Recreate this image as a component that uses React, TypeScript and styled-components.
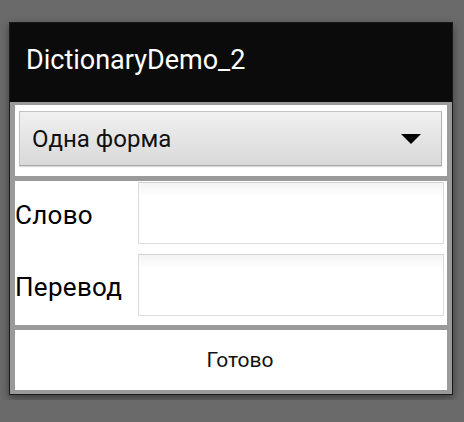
import React from "react";
import styled, { createGlobalStyle } from "styled-components";

const Global = createGlobalStyle`
  html, body { margin: 0; padding: 0; background: #6a6a6a; }
  body { font-family: Roboto, "Noto Sans", sans-serif; }
  #root { padding: 22px 0 0 9px; height: 400px; box-sizing: border-box; }
`;

const Window = styled.div`
  width: 444px;
  height: 373px;
  box-sizing: border-box;
  border: 1px solid #1a1a1a;
  background: #9a9a9a;
  display: flex;
  flex-direction: column;
  box-shadow: 0 3px 8px rgba(0, 0, 0, 0.45);
`;

const TitleBar = styled.div`
  height: 79px;
  background: #0b0b0b;
  color: #fff;
  display: flex;
  align-items: center;
  padding: 0 0 5px 16px;
  font-size: 27px;
  flex-shrink: 0;
  box-sizing: border-box;
`;

const Content = styled.div`
  flex: 1;
  display: flex;
  flex-direction: column;
  gap: 5px;
  padding: 3px 5px 4px 5px;
`;

const Section = styled.div<{ $h: number }>`
  background: #fff;
  height: ${(p) => p.$h}px;
  box-sizing: border-box;
`;

const SpinnerWrap = styled(Section)`
  padding: 6px 5px 10px 4px;
`;

const Spinner = styled.div`
  height: 100%;
  box-sizing: border-box;
  border: 1px solid #c2c2c2;
  border-bottom-color: #a8a8a8;
  border-right-color: #b0b0b0;
  background: linear-gradient(#f0f0f0, #d9d9d9);
  box-shadow: 0 1px 1px rgba(0, 0, 0, 0.15);
  display: flex;
  align-items: center;
  justify-content: space-between;
  padding: 0 20px 0 12px;
  font-size: 24px;
  color: #111;
`;

const Arrow = styled.div`
  width: 0;
  height: 0;
  border-left: 10px solid transparent;
  border-right: 10px solid transparent;
  border-top: 10px solid #000;
`;

const Form = styled(Section)`
  display: grid;
  grid-template-columns: 123px 1fr;
  grid-auto-rows: 62px;
  row-gap: 10px;
  padding: 1px 3px 0 0;
  align-items: center;
`;

const Label = styled.div`
  font-size: 26px;
  letter-spacing: 0.3px;
  color: #000;
  padding-top: 4px;
`;

const Input = styled.div`
  height: 100%;
  box-sizing: border-box;
  border: 1px solid #dcdcdc;
  border-top-color: #d2d2d2;
  background: linear-gradient(#f4f4f4, #fff 14px);
`;

const Button = styled(Section)`
  display: flex;
  align-items: center;
  justify-content: center;
  font-size: 21px;
  color: #111;
  padding-left: 18px;
`;

export default function App() {
  return (
    <>
      <Global />
      <Window>
        <TitleBar>DictionaryDemo_2</TitleBar>
        <Content>
          <SpinnerWrap $h={71}>
            <Spinner>
              <span>Одна форма</span>
              <Arrow />
            </Spinner>
          </SpinnerWrap>
          <Form $h={144}>
            <Label>Слово</Label>
            <Input />
            <Label>Перевод</Label>
            <Input />
          </Form>
          <Button $h={60}>Готово</Button>
        </Content>
      </Window>
    </>
  );
}
